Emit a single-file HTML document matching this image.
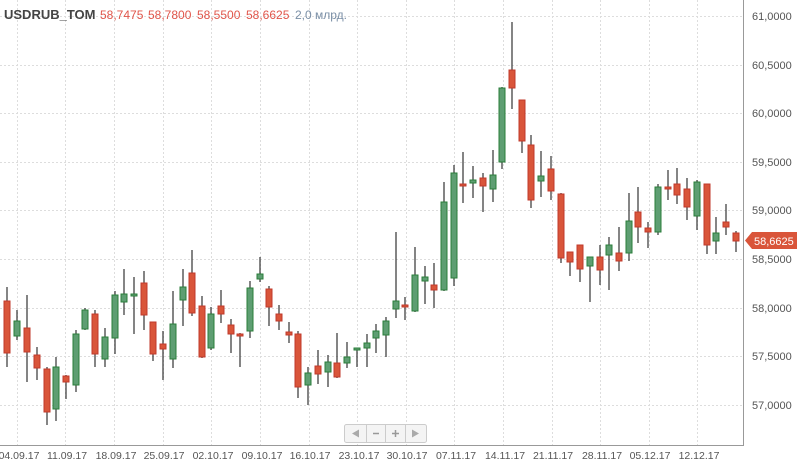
<!DOCTYPE html>
<html><head><meta charset="utf-8"><style>
html,body{margin:0;padding:0;background:#fff;width:800px;height:464px;overflow:hidden;font-family:"Liberation Sans",Arial,sans-serif}
</style></head><body>
<svg width="800" height="464" viewBox="0 0 800 464" xmlns="http://www.w3.org/2000/svg" font-family="Liberation Sans, Arial, sans-serif">
<g stroke="#ddd" stroke-width="1" stroke-dasharray="2,2">
<line x1="0" y1="16.5" x2="743" y2="16.5"/><line x1="0" y1="65.5" x2="743" y2="65.5"/><line x1="0" y1="113.5" x2="743" y2="113.5"/><line x1="0" y1="162.5" x2="743" y2="162.5"/><line x1="0" y1="210.5" x2="743" y2="210.5"/><line x1="0" y1="259.5" x2="743" y2="259.5"/><line x1="0" y1="308.5" x2="743" y2="308.5"/><line x1="0" y1="356.5" x2="743" y2="356.5"/><line x1="0" y1="405.5" x2="743" y2="405.5"/>
<line x1="17.5" y1="0" x2="17.5" y2="445"/><line x1="65.5" y1="0" x2="65.5" y2="445"/><line x1="114.5" y1="0" x2="114.5" y2="445"/><line x1="163.5" y1="0" x2="163.5" y2="445"/><line x1="211.5" y1="0" x2="211.5" y2="445"/><line x1="260.5" y1="0" x2="260.5" y2="445"/><line x1="309.5" y1="0" x2="309.5" y2="445"/><line x1="357.5" y1="0" x2="357.5" y2="445"/><line x1="406.5" y1="0" x2="406.5" y2="445"/><line x1="454.5" y1="0" x2="454.5" y2="445"/><line x1="503.5" y1="0" x2="503.5" y2="445"/><line x1="552.5" y1="0" x2="552.5" y2="445"/><line x1="600.5" y1="0" x2="600.5" y2="445"/><line x1="649.5" y1="0" x2="649.5" y2="445"/><line x1="697.5" y1="0" x2="697.5" y2="445"/>
</g>
<line x1="743.5" y1="0" x2="743.5" y2="446" stroke="#999"/>
<line x1="0" y1="445.5" x2="744" y2="445.5" stroke="#999"/>
<g stroke="#333" stroke-width="1.2">
<line x1="7" y1="287" x2="7" y2="367"/><line x1="17" y1="310" x2="17" y2="340"/><line x1="27" y1="295" x2="27" y2="382"/><line x1="37" y1="347" x2="37" y2="380"/><line x1="47" y1="367" x2="47" y2="425"/><line x1="56" y1="357" x2="56" y2="421"/><line x1="66" y1="375" x2="66" y2="399"/><line x1="76" y1="330" x2="76" y2="392"/><line x1="85" y1="308" x2="85" y2="330"/><line x1="95" y1="310" x2="95" y2="367"/><line x1="105" y1="328" x2="105" y2="367"/><line x1="115" y1="291" x2="115" y2="354"/><line x1="124" y1="269" x2="124" y2="315"/><line x1="134" y1="277" x2="134" y2="334"/><line x1="144" y1="271" x2="144" y2="330"/><line x1="153" y1="322" x2="153" y2="361"/><line x1="163" y1="331" x2="163" y2="380"/><line x1="173" y1="291" x2="173" y2="368"/><line x1="183" y1="269" x2="183" y2="326"/><line x1="192" y1="250" x2="192" y2="316"/><line x1="202" y1="296" x2="202" y2="358"/><line x1="211" y1="307" x2="211" y2="350"/><line x1="221" y1="290" x2="221" y2="323"/><line x1="231" y1="319" x2="231" y2="353"/><line x1="240" y1="333" x2="240" y2="367"/><line x1="250" y1="281" x2="250" y2="338"/><line x1="260" y1="257" x2="260" y2="282"/><line x1="269" y1="286" x2="269" y2="326"/><line x1="279" y1="305" x2="279" y2="330"/><line x1="289" y1="322" x2="289" y2="343"/><line x1="298" y1="331" x2="298" y2="398"/><line x1="308" y1="367" x2="308" y2="405"/><line x1="318" y1="350" x2="318" y2="384"/><line x1="328" y1="355" x2="328" y2="387"/><line x1="337" y1="333" x2="337" y2="378"/><line x1="347" y1="342" x2="347" y2="368"/><line x1="357" y1="349" x2="357" y2="367"/><line x1="367" y1="334" x2="367" y2="367"/><line x1="376" y1="324" x2="376" y2="353"/><line x1="386" y1="317" x2="386" y2="357"/><line x1="396" y1="232" x2="396" y2="318"/><line x1="405" y1="297" x2="405" y2="320"/><line x1="415" y1="247" x2="415" y2="312"/><line x1="425" y1="266" x2="425" y2="304"/><line x1="434" y1="263" x2="434" y2="308"/><line x1="444" y1="182" x2="444" y2="291"/><line x1="454" y1="165" x2="454" y2="286"/><line x1="463" y1="152" x2="463" y2="203"/><line x1="473" y1="166" x2="473" y2="198"/><line x1="483" y1="173" x2="483" y2="212"/><line x1="493" y1="150" x2="493" y2="202"/><line x1="502" y1="87" x2="502" y2="169"/><line x1="512" y1="22" x2="512" y2="109"/><line x1="522" y1="100" x2="522" y2="153"/><line x1="531" y1="135" x2="531" y2="208"/><line x1="541" y1="151" x2="541" y2="197"/><line x1="551" y1="156" x2="551" y2="200"/><line x1="561" y1="193" x2="561" y2="263"/><line x1="570" y1="252" x2="570" y2="276"/><line x1="580" y1="245" x2="580" y2="282"/><line x1="590" y1="257" x2="590" y2="302"/><line x1="600" y1="245" x2="600" y2="285"/><line x1="609" y1="237" x2="609" y2="290"/><line x1="619" y1="227" x2="619" y2="271"/><line x1="629" y1="193" x2="629" y2="261"/><line x1="638" y1="187" x2="638" y2="243"/><line x1="648" y1="222" x2="648" y2="248"/><line x1="658" y1="184" x2="658" y2="235"/><line x1="668" y1="170" x2="668" y2="200"/><line x1="677" y1="168" x2="677" y2="204"/><line x1="687" y1="178" x2="687" y2="220"/><line x1="697" y1="180" x2="697" y2="230"/><line x1="707" y1="184" x2="707" y2="254"/><line x1="716" y1="217" x2="716" y2="254"/><line x1="726" y1="204" x2="726" y2="235"/><line x1="736" y1="231" x2="736" y2="252"/>
</g>
<g fill="#d9553a" stroke="#c0392b" stroke-width="1">
<rect x="4" y="301" width="6" height="52"/><rect x="24" y="328" width="6" height="24"/><rect x="34" y="355" width="6" height="13"/><rect x="44" y="369" width="6" height="43"/><rect x="63" y="376" width="6" height="6"/><rect x="92" y="314" width="6" height="40"/><rect x="141" y="283" width="6" height="32"/><rect x="150" y="322" width="6" height="32"/><rect x="160" y="344" width="6" height="5"/><rect x="189" y="273" width="6" height="40"/><rect x="199" y="306" width="6" height="51"/><rect x="218" y="306" width="6" height="8"/><rect x="228" y="325" width="6" height="9"/><rect x="237" y="334" width="6" height="2"/><rect x="266" y="289" width="6" height="18"/><rect x="276" y="314" width="6" height="7"/><rect x="286" y="332" width="6" height="3"/><rect x="295" y="334" width="6" height="53"/><rect x="315" y="366" width="6" height="8"/><rect x="334" y="363" width="6" height="14"/><rect x="402" y="305" width="6" height="2"/><rect x="431" y="285" width="6" height="5"/><rect x="460" y="184" width="6" height="2"/><rect x="480" y="178" width="6" height="8"/><rect x="509" y="70" width="6" height="18"/><rect x="519" y="100" width="6" height="41"/><rect x="528" y="145" width="6" height="55"/><rect x="548" y="169" width="6" height="22"/><rect x="558" y="194" width="6" height="64"/><rect x="567" y="252" width="6" height="10"/><rect x="577" y="245" width="6" height="24"/><rect x="597" y="257" width="6" height="13"/><rect x="616" y="253" width="6" height="8"/><rect x="635" y="212" width="6" height="15"/><rect x="645" y="228" width="6" height="4"/><rect x="665" y="187" width="6" height="2"/><rect x="674" y="184" width="6" height="11"/><rect x="684" y="189" width="6" height="18"/><rect x="704" y="184" width="6" height="61"/><rect x="723" y="222" width="6" height="5"/><rect x="733" y="233" width="6" height="8"/>
</g>
<g fill="#5e9e72" stroke="#2a7d3a" stroke-width="1">
<rect x="14" y="321" width="6" height="15"/><rect x="53" y="367" width="6" height="42"/><rect x="73" y="334" width="6" height="51"/><rect x="82" y="310" width="6" height="19"/><rect x="102" y="337" width="6" height="22"/><rect x="112" y="295" width="6" height="43"/><rect x="121" y="294" width="6" height="8"/><rect x="131" y="294" width="6" height="2"/><rect x="170" y="324" width="6" height="35"/><rect x="180" y="287" width="6" height="13"/><rect x="208" y="314" width="6" height="34"/><rect x="247" y="288" width="6" height="43"/><rect x="257" y="274" width="6" height="5"/><rect x="305" y="373" width="6" height="12"/><rect x="325" y="362" width="6" height="10"/><rect x="344" y="357" width="6" height="6"/><rect x="354" y="348" width="6" height="2"/><rect x="364" y="343" width="6" height="5"/><rect x="373" y="331" width="6" height="7"/><rect x="383" y="321" width="6" height="14"/><rect x="393" y="301" width="6" height="8"/><rect x="412" y="275" width="6" height="36"/><rect x="422" y="277" width="6" height="4"/><rect x="441" y="202" width="6" height="88"/><rect x="451" y="173" width="6" height="105"/><rect x="470" y="180" width="6" height="3"/><rect x="490" y="175" width="6" height="14"/><rect x="499" y="88" width="6" height="74"/><rect x="538" y="176" width="6" height="5"/><rect x="587" y="257" width="6" height="9"/><rect x="606" y="245" width="6" height="10"/><rect x="626" y="221" width="6" height="32"/><rect x="655" y="187" width="6" height="45"/><rect x="694" y="182" width="6" height="34"/><rect x="713" y="233" width="6" height="8"/>
</g>
<g fill="#555" font-size="11">
<text x="752" y="20">61,0000</text><text x="752" y="69">60,5000</text><text x="752" y="117">60,0000</text><text x="752" y="166">59,5000</text><text x="752" y="214">59,0000</text><text x="752" y="263">58,5000</text><text x="752" y="312">58,0000</text><text x="752" y="360">57,5000</text><text x="752" y="409">57,0000</text>
</g>
<path d="M745 240.5 L752 232 L797 232 L797 249 L752 249 Z" fill="#d9553a"/>
<text x="754" y="245" fill="#fff" font-size="11">58,6625</text>
<g fill="#555" font-size="10.5" text-anchor="middle">
<text x="19" y="459">04.09.17</text><text x="67" y="459">11.09.17</text><text x="116" y="459">18.09.17</text><text x="164" y="459">25.09.17</text><text x="213" y="459">02.10.17</text><text x="262" y="459">09.10.17</text><text x="310" y="459">16.10.17</text><text x="359" y="459">23.10.17</text><text x="407" y="459">30.10.17</text><text x="456" y="459">07.11.17</text><text x="505" y="459">14.11.17</text><text x="553" y="459">21.11.17</text><text x="602" y="459">28.11.17</text><text x="650" y="459">05.12.17</text><text x="699" y="459">12.12.17</text>
</g>
<g>
<rect x="344.5" y="424.5" width="82" height="18" rx="2" fill="#f4f4f4" stroke="#ccc"/>
<line x1="366.5" y1="425" x2="366.5" y2="442" stroke="#ccc"/><line x1="385.5" y1="425" x2="385.5" y2="442" stroke="#ccc"/><line x1="405.5" y1="425" x2="405.5" y2="442" stroke="#ccc"/>
<path d="M352 433.5 L359 429.5 L359 437.5 Z" fill="#aaa"/>
<line x1="373" y1="433.5" x2="379" y2="433.5" stroke="#999" stroke-width="1.5"/>
<line x1="392" y1="433.5" x2="399" y2="433.5" stroke="#999" stroke-width="1.5"/><line x1="395.5" y1="430" x2="395.5" y2="437" stroke="#999" stroke-width="1.5"/>
<path d="M419 433.5 L412 429.5 L412 437.5 Z" fill="#aaa"/>
</g>
<text x="4" y="19" font-size="13" font-weight="bold" fill="#444">USDRUB_TOM</text>
<text x="100" y="19" font-size="12" fill="#e0554a">58,7475</text>
<text x="148" y="19" font-size="12" fill="#e0554a">58,7800</text>
<text x="197" y="19" font-size="12" fill="#e0554a">58,5500</text>
<text x="246" y="19" font-size="12" fill="#e0554a">58,6625</text>
<text x="295" y="19" font-size="12" fill="#7a8fa6">2,0 млрд.</text>
</svg>
</body></html>
